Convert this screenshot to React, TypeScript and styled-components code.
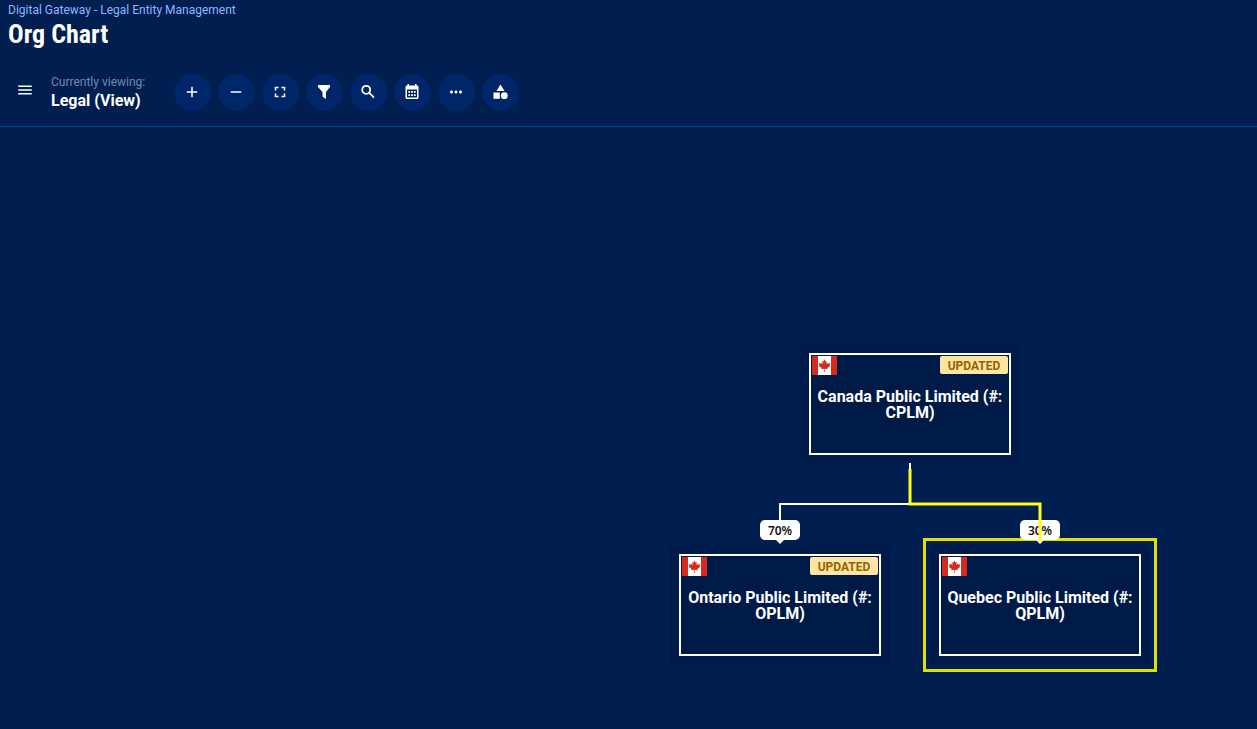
import React from "react";
import styled, { createGlobalStyle, css } from "styled-components";
import {
  MdAdd,
  MdRemove,
  MdFullscreen,
  MdMoreHoriz,
  MdMenu,
} from "react-icons/md";

const GlobalStyle = createGlobalStyle`
  *, *::before, *::after { box-sizing: border-box; }
  html, body, #root { height: 100%; }
  body {
    margin: 0;
    background: #001e50;
    color: #fff;
    font-family: Roboto, "Liberation Sans", sans-serif;
  }
`;

const Page = styled.div`
  display: flex;
  flex-direction: column;
  min-height: 100%;
`;

const Header = styled.header`
  padding: 2px 8px 0;
`;

const Breadcrumb = styled.p`
  margin: 0;
  font-size: 12px;
  line-height: 16px;
  color: #8db8ff;
`;

const Title = styled.h1`
  margin: 0;
  font-family: "Roboto Condensed", "Liberation Sans Narrow", Roboto, sans-serif;
  font-size: 26px;
  font-weight: 700;
  line-height: 32px;
`;

const Toolbar = styled.div`
  display: flex;
  align-items: center;
  height: 77px;
  padding: 8px 16px 0;
  border-bottom: 1px solid #004388;
`;

const MenuButton = styled.button`
  display: flex;
  padding: 0;
  margin: 0 17px 4px 0;
  border: 0;
  background: none;
  color: #fff;
  font-size: 18px;
`;

const Viewing = styled.div`
  width: 123px;
  white-space: nowrap;
`;

const ViewingLabel = styled.div`
  font-size: 12px;
  line-height: 16px;
  color: #7687a8;
`;

const ViewingName = styled.div`
  padding-top: 1px;
  font-size: 16px;
  font-weight: 700;
  line-height: 20px;
`;

const Actions = styled.div`
  display: flex;
  gap: 7px;
`;

const ActionButton = styled.button`
  display: flex;
  align-items: center;
  justify-content: center;
  width: 37px;
  height: 37px;
  padding: 0 1px 1px 0;
  border: 0;
  border-radius: 50%;
  background: #00266a;
  color: #fff;
  font-size: 18px;
`;

const Canvas = styled.main`
  position: relative;
  flex: 1;
  min-height: 602px;
  overflow: hidden;
`;

const Links = styled.svg`
  position: absolute;
  left: 0;
  top: 0;
  width: 100%;
  height: 100%;
  pointer-events: none;
`;

const Node = styled.article<{ $x: number; $y: number; $selected?: boolean }>`
  position: absolute;
  left: ${(p) => p.$x}px;
  top: ${(p) => p.$y}px;
  width: 220px;
  height: 120px;
  padding: 9px;
  background: #001b4a;
  ${(p) =>
    p.$selected &&
    css`
      outline: 3px solid #dfe007;
      outline-offset: 4px;
    `}
`;

const Card = styled.div`
  display: flex;
  flex-direction: column;
  height: 102px;
  padding: 1px;
  border: 2px solid #fff;
  background: #001a47;
`;

const CardTop = styled.div`
  display: flex;
  justify-content: space-between;
  height: 19px;
`;

const Flag = styled.svg`
  width: 25px;
  height: 19px;
`;

const Badge = styled.span`
  width: 68px;
  height: 18px;
  border-radius: 2px;
  background: #ffe5a3;
  color: #8f6500;
  font-size: 12px;
  font-weight: 700;
  line-height: 20px;
  text-align: center;
`;

const EntityName = styled.h2`
  margin: 14px 0 0;
  font-size: 16px;
  font-weight: 700;
  line-height: 16px;
  text-align: center;
`;

const Share = styled.div<{ $x: number; $y: number }>`
  position: absolute;
  left: ${(p) => p.$x}px;
  top: ${(p) => p.$y}px;
  width: 40px;
  height: 20px;
  border-radius: 5px;
  background: #fff;
  color: #111;
  font-family: "Noto Sans", sans-serif;
  font-size: 12px;
  font-weight: 600;
  line-height: 21px;
  text-align: center;

  &::after {
    content: "";
    position: absolute;
    left: 16px;
    top: 20px;
    border: 4px solid transparent;
    border-top-color: #fff;
    border-bottom: 0;
  }
`;

function FilterIcon() {
  return (
    <svg width="18" height="18" viewBox="0 0 18 18" fill="currentColor" aria-hidden="true">
      <path d="M3 2h12v2l-4 5v6.5h-1L7.500 13.500V9L3 4z" />
    </svg>
  );
}

function SearchIcon() {
  return (
    <svg
      width="18"
      height="18"
      viewBox="0 0 18 18"
      fill="none"
      stroke="currentColor"
      strokeWidth="1.8"
      aria-hidden="true"
    >
      <circle cx="7.200" cy="6.800" r="4" />
      <path d="M10 9.700l5 5" />
    </svg>
  );
}

function CalendarIcon() {
  return (
    <svg width="18" height="18" viewBox="0 0 18 18" fill="currentColor" aria-hidden="true">
      <path
        fillRule="evenodd"
        d="M4.500 1H6v1.500h6V1h1.500v1.500h.5a1.500 1.500 0 0 1 1.500 1.500v10.500a1.500 1.500 0 0 1-1.500 1.500H4a1.500 1.500 0 0 1-1.500-1.500V4A1.500 1.500 0 0 1 4 2.500h.5zM4 6.500v8h10v-8z"
      />
      <path d="M5.300 8h1.800v1.800H5.300zM8.100 8h1.800v1.800H8.100zM10.900 8h1.800v1.800h-1.800zM5.300 11.200h1.800V13H5.300zM8.100 11.200h1.800V13H8.100zM10.900 11.200h1.800V13h-1.800z" />
    </svg>
  );
}

function ShapesIcon() {
  return (
    <svg width="18" height="18" viewBox="0 0 18 18" fill="currentColor" aria-hidden="true">
      <path d="M9.500 1.500l4 6.500h-8z" />
      <path d="M2.500 9.500h6.300v6.300H2.500z" />
      <circle cx="13.300" cy="12.700" r="3.400" />
    </svg>
  );
}

function CanadaFlag() {
  return (
    <Flag viewBox="0 0 25 19" role="img" aria-label="Canada">
      <path fill="#fff" d="M0 0h25v19H0z" />
      <path fill="#d52b1e" d="M0 0h6v19H0zM19 0h6v19h-6z" />
      <path
        fill="#d52b1e"
        d="M12.500 3.500l-1.200 2.200-1.200-.6.6 3.200-1.700-1.600-.3.9-1.900-.3.6 2-.8.4 3 2.400-.4 1.100 3-.5-.1 3h.8l-.1-3 3 .5-.4-1.100 3-2.400-.8-.4.6-2-1.900.3-.3-.9-1.700 1.600.6-3.200-1.200.6z"
      />
    </Flag>
  );
}

const actions = [
  { label: "Zoom in", icon: <MdAdd /> },
  { label: "Zoom out", icon: <MdRemove /> },
  { label: "Fit to screen", icon: <MdFullscreen /> },
  { label: "Filter", icon: <FilterIcon /> },
  { label: "Search", icon: <SearchIcon /> },
  { label: "Date", icon: <CalendarIcon /> },
  { label: "More", icon: <MdMoreHoriz /> },
  { label: "Legend", icon: <ShapesIcon /> },
];

const entities = [
  { name: "Canada Public Limited (#: CPLM)", x: 800, y: 217, updated: true },
  { name: "Ontario Public Limited (#: OPLM)", x: 670, y: 418, updated: true },
  { name: "Quebec Public Limited (#: QPLM)", x: 930, y: 418, selected: true },
];

export default function App() {
  return (
    <Page>
      <GlobalStyle />
      <Header>
        <Breadcrumb>Digital Gateway - Legal Entity Management</Breadcrumb>
        <Title>Org Chart</Title>
      </Header>
      <Toolbar>
        <MenuButton aria-label="Menu">
          <MdMenu />
        </MenuButton>
        <Viewing>
          <ViewingLabel>Currently viewing:</ViewingLabel>
          <ViewingName>Legal (View)</ViewingName>
        </Viewing>
        <Actions>
          {actions.map((a) => (
            <ActionButton key={a.label} aria-label={a.label}>
              {a.icon}
            </ActionButton>
          ))}
        </Actions>
      </Toolbar>
      <Canvas>
        {entities.map((e) => (
          <Node key={e.name} $x={e.x} $y={e.y} $selected={e.selected}>
            <Card>
              <CardTop>
                <CanadaFlag />
                {e.updated && <Badge>UPDATED</Badge>}
              </CardTop>
              <EntityName>{e.name}</EntityName>
            </Card>
          </Node>
        ))}
        <Share $x={760} $y={393}>70%</Share>
        <Share $x={1020} $y={393}>30%</Share>
        <Links aria-hidden="true" fill="none">
          <path d="M910 336v41H780v17" stroke="#fff" strokeWidth="2" />
          <path d="M910 342v35h130v37" stroke="#ffff1e" strokeWidth="3" />
        </Links>
      </Canvas>
    </Page>
  );
}
